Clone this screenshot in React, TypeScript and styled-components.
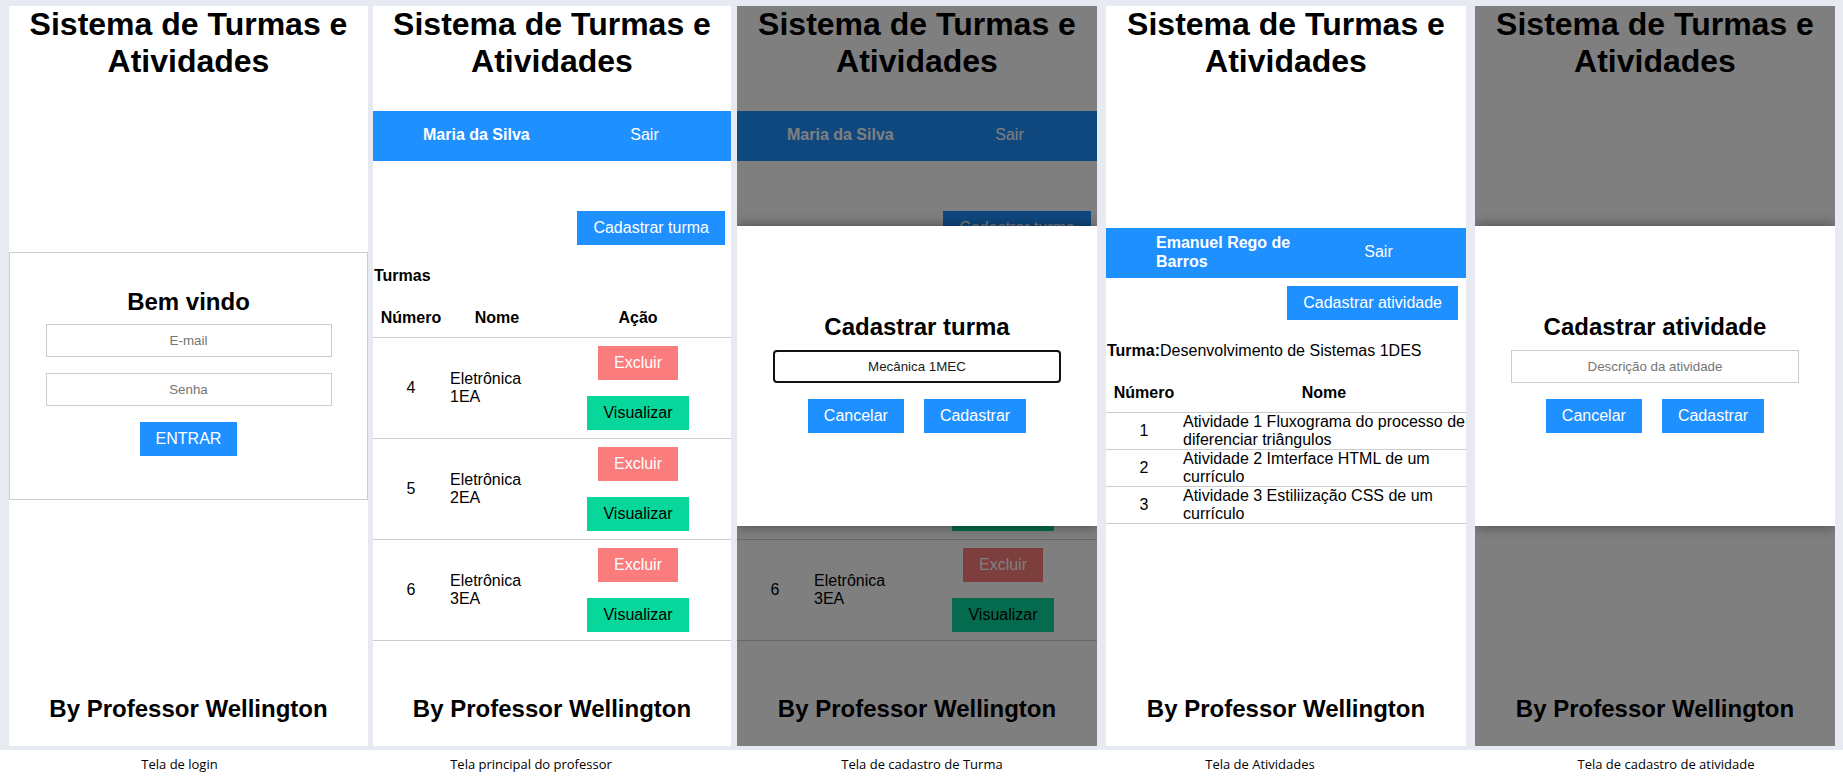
import React from 'react';
import styled, { createGlobalStyle } from 'styled-components';

const GlobalStyle = createGlobalStyle`
  * {
    box-sizing: border-box;
  }
  body {
    margin: 0;
    background: #fff;
    font-family: 'Liberation Sans', Arial, sans-serif;
  }
`;

const turmas = [
  { id: 4, nome: 'Eletrônica 1EA' },
  { id: 5, nome: 'Eletrônica 2EA' },
  { id: 6, nome: 'Eletrônica 3EA' },
];

const atividades = [
  { id: 1, nome: 'Atividade 1 Fluxograma do processo de diferenciar triângulos' },
  { id: 2, nome: 'Atividade 2 Imterface HTML de um currículo' },
  { id: 3, nome: 'Atividade 3 Estiliização CSS de um currículo' },
];

// width of each screenshot, space before it, and how far its caption sits off-centre
const shots = [
  { width: 359, lead: 0, caption: 'Tela de login', nudge: -9 },
  { width: 358, lead: 5, caption: 'Tela principal do professor', nudge: -21 },
  { width: 360, lead: 6, caption: 'Tela de cadastro de Turma', nudge: 5 },
  { width: 360, lead: 9, caption: 'Tela de Atividades', nudge: -26 },
  { width: 360, lead: 9, caption: 'Tela de cadastro de atividade', nudge: 11 },
];

type Tone = 'primary' | 'danger' | 'success';

const tones: Record<Tone, { bg: string; fg: string }> = {
  primary: { bg: '#1e90ff', fg: '#fff' },
  danger: { bg: '#fa7c7c', fg: '#fff' },
  success: { bg: '#08d79c', fg: '#000' },
};

const Screen = ({
  index,
  children,
  modal,
}: {
  index: number;
  children: React.ReactNode;
  modal?: React.ReactNode;
}) => (
  <Panel $width={shots[index].width} $lead={shots[index].lead}>
    <Title>Sistema de Turmas e Atividades</Title>
    <Main>{children}</Main>
    <Footer>By Professor Wellington</Footer>
    {modal && (
      <Overlay>
        <Dialog>{modal}</Dialog>
      </Overlay>
    )}
  </Panel>
);

const LoginScreen = () => (
  <Screen index={0}>
    <LoginBox>
      <BoxTitle>Bem vindo</BoxTitle>
      <Field $width={286} placeholder="E-mail" readOnly />
      <Field $width={286} placeholder="Senha" readOnly />
      <Button type="button" $tone="primary">
        ENTRAR
      </Button>
    </LoginBox>
  </Screen>
);

const ProfessorScreen = ({ index, modal }: { index: number; modal?: React.ReactNode }) => (
  <Screen index={index} modal={modal}>
    <NavBar>
      <UserName>Maria da Silva</UserName>
      <NavLink>Sair</NavLink>
    </NavBar>
    <ActionBar $top={50} $right={6}>
      <Button $tone="primary">Cadastrar turma</Button>
    </ActionBar>
    <SectionLabel>
      <strong>Turmas</strong>
    </SectionLabel>
    <Table>
      <colgroup>
        <Col $width={76} />
        <Col $width={96} />
        <col />
      </colgroup>
      <thead>
        <tr>
          <Th>Número</Th>
          <Th>Nome</Th>
          <Th>Ação</Th>
        </tr>
      </thead>
      <tbody>
        {turmas.map((t) => (
          <tr key={t.id}>
            <NumberCell>{t.id}</NumberCell>
            <NameCell>{t.nome}</NameCell>
            <ActionCell>
              <ActionStack>
                <Button $tone="danger">Excluir</Button>
                <Button $tone="success">Visualizar</Button>
              </ActionStack>
            </ActionCell>
          </tr>
        ))}
      </tbody>
    </Table>
  </Screen>
);

const ActivitiesScreen = ({ index, modal }: { index: number; modal?: React.ReactNode }) => (
  <Screen index={index} modal={modal}>
    <NavBar>
      <UserName>Emanuel Rego de Barros</UserName>
      <NavLink>Sair</NavLink>
    </NavBar>
    <ActionBar $top={8} $right={8}>
      <Button $tone="primary">Cadastrar atividade</Button>
    </ActionBar>
    <SectionLabel>
      <strong>Turma:</strong>Desenvolvimento de Sistemas 1DES
    </SectionLabel>
    <Table>
      <colgroup>
        <Col $width={76} />
        <col />
      </colgroup>
      <thead>
        <tr>
          <Th>Número</Th>
          <Th>Nome</Th>
        </tr>
      </thead>
      <tbody>
        {atividades.map((a) => (
          <tr key={a.id}>
            <NumberCell $tight>{a.id}</NumberCell>
            <NameCell $tight>{a.nome}</NameCell>
          </tr>
        ))}
      </tbody>
    </Table>
  </Screen>
);

const RegisterForm = ({
  title,
  value,
  placeholder,
}: {
  title: string;
  value?: string;
  placeholder?: string;
}) => (
  <>
    <BoxTitle>{title}</BoxTitle>
    <Field $width={288} $focused={!!value} value={value} placeholder={placeholder} readOnly />
    <DialogActions>
      <Button $tone="primary">Cancelar</Button>
      <Button $tone="primary">Cadastrar</Button>
    </DialogActions>
  </>
);

export default function App() {
  return (
    <>
      <GlobalStyle />
      <Board>
        <Strip>
          <LoginScreen />
          <ProfessorScreen index={1} />
          <ProfessorScreen
            index={2}
            modal={<RegisterForm title="Cadastrar turma" value="Mecânica 1MEC" />}
          />
          <ActivitiesScreen index={3} />
          <ActivitiesScreen
            index={4}
            modal={<RegisterForm title="Cadastrar atividade" placeholder="Descrição da atividade" />}
          />
        </Strip>
        <Captions>
          {shots.map((s) => (
            <Caption key={s.caption} $width={s.width} $lead={s.lead} $nudge={s.nudge}>
              {s.caption}
            </Caption>
          ))}
        </Captions>
      </Board>
    </>
  );
}

const Board = styled.div`
  width: 1843px;
`;

const Strip = styled.div`
  display: flex;
  align-items: flex-start;
  padding: 6px 0 4px 9px;
  background: #e7eaf1;
`;

const Panel = styled.section<{ $width: number; $lead: number }>`
  position: relative;
  width: ${(p) => p.$width}px;
  margin-left: ${(p) => p.$lead}px;
  height: 740px;
  display: grid;
  grid-template-rows: 1fr auto 1fr;
  background: #fff;
  color: #000;
  font-size: 16px;
  line-height: 18.4px;
  overflow: hidden;
`;

const Title = styled.h1`
  align-self: start;
  margin: 0;
  font-size: 32px;
  font-weight: bold;
  line-height: 37px;
  text-align: center;
`;

const Main = styled.div`
  display: flex;
  flex-direction: column;
`;

const Footer = styled.h2`
  align-self: end;
  margin: 0 0 23px;
  font-size: 24px;
  font-weight: bold;
  line-height: 27.6px;
  text-align: center;
`;

const LoginBox = styled.form`
  display: flex;
  flex-direction: column;
  align-items: center;
  gap: 16px;
  padding: 35px 0 43px;
  border: 1px solid #ccc;
`;

const BoxTitle = styled.h2`
  margin: 0 0 -7px;
  font-size: 24px;
  font-weight: bold;
  line-height: 27.6px;
  text-align: center;
`;

const Field = styled.input<{ $width: number; $focused?: boolean }>`
  width: ${(p) => p.$width}px;
  height: 33px;
  padding: 0 8px;
  border: ${(p) => (p.$focused ? '2px solid #111' : '1px solid #ccc')};
  border-radius: ${(p) => (p.$focused ? '4px' : '0')};
  outline: none;
  font-family: 'Liberation Sans', Arial, sans-serif;
  font-size: 13.33px;
  color: #1a1a1a;
  text-align: center;
  background: #fff;
  &::placeholder {
    color: #757575;
  }
`;

const Button = styled.button<{ $tone: Tone }>`
  padding: 8px 16px;
  border: 0;
  background: ${(p) => tones[p.$tone].bg};
  color: ${(p) => tones[p.$tone].fg};
  font-family: 'Liberation Sans', Arial, sans-serif;
  font-size: 16px;
  line-height: 18px;
  cursor: pointer;
`;

const NavBar = styled.nav`
  display: flex;
  align-items: center;
  height: 50px;
  padding-left: 50px;
  background: #1e90ff;
  color: #fff;
`;

const UserName = styled.strong`
  width: 135px;
`;

const NavLink = styled.span`
  flex: 1;
  text-align: center;
`;

const ActionBar = styled.div<{ $top: number; $right: number }>`
  display: flex;
  justify-content: flex-end;
  margin-top: ${(p) => p.$top}px;
  padding-right: ${(p) => p.$right}px;
`;

const SectionLabel = styled.p`
  margin: 22px 0 0;
  padding-left: 1px;
`;

const Table = styled.table`
  width: 100%;
  margin-top: 14px;
  border-collapse: collapse;
  table-layout: fixed;
`;

const Col = styled.col<{ $width: number }>`
  width: ${(p) => p.$width}px;
`;

const Th = styled.th`
  padding: 10px 0;
  border-bottom: 1px solid #ccc;
  font-weight: bold;
  text-align: center;
`;

const NumberCell = styled.td<{ $tight?: boolean }>`
  padding: 0;
  border-bottom: 1px solid #ccc;
  text-align: center;
  vertical-align: middle;
  line-height: ${(p) => (p.$tight ? '18px' : '18.4px')};
`;

const NameCell = styled.td<{ $tight?: boolean }>`
  padding: 0 0 0 1px;
  border-bottom: 1px solid #ccc;
  text-align: left;
  vertical-align: middle;
  line-height: ${(p) => (p.$tight ? '18px' : '18.4px')};
`;

const ActionCell = styled.td`
  padding: 8px 0;
  border-bottom: 1px solid #ccc;
  vertical-align: middle;
`;

const ActionStack = styled.div`
  display: flex;
  flex-direction: column;
  align-items: center;
  gap: 16px;
`;

const Overlay = styled.div`
  position: absolute;
  inset: 0;
  display: flex;
  align-items: center;
  background: rgba(0, 0, 0, 0.5);
`;

const Dialog = styled.div`
  width: 100%;
  height: 300px;
  display: flex;
  flex-direction: column;
  align-items: center;
  justify-content: center;
  padding-bottom: 6px;
  background: #fff;
  box-shadow: 0 0 12px rgba(0, 0, 0, 0.45);

  ${BoxTitle} {
    margin-bottom: 9px;
  }
`;

const DialogActions = styled.div`
  display: flex;
  gap: 20px;
  margin-top: 16px;
`;

const Captions = styled.div`
  display: flex;
  align-items: center;
  height: 27px;
  padding-left: 9px;
  font-family: 'Open Sans', sans-serif;
  font-size: 13px;
  color: #000;
`;

const Caption = styled.div<{ $width: number; $lead: number; $nudge: number }>`
  width: ${(p) => p.$width}px;
  margin-left: ${(p) => p.$lead}px;
  padding-left: ${(p) => Math.max(0, p.$nudge * 2)}px;
  padding-right: ${(p) => Math.max(0, -p.$nudge * 2)}px;
  text-align: center;
  white-space: nowrap;
`;
